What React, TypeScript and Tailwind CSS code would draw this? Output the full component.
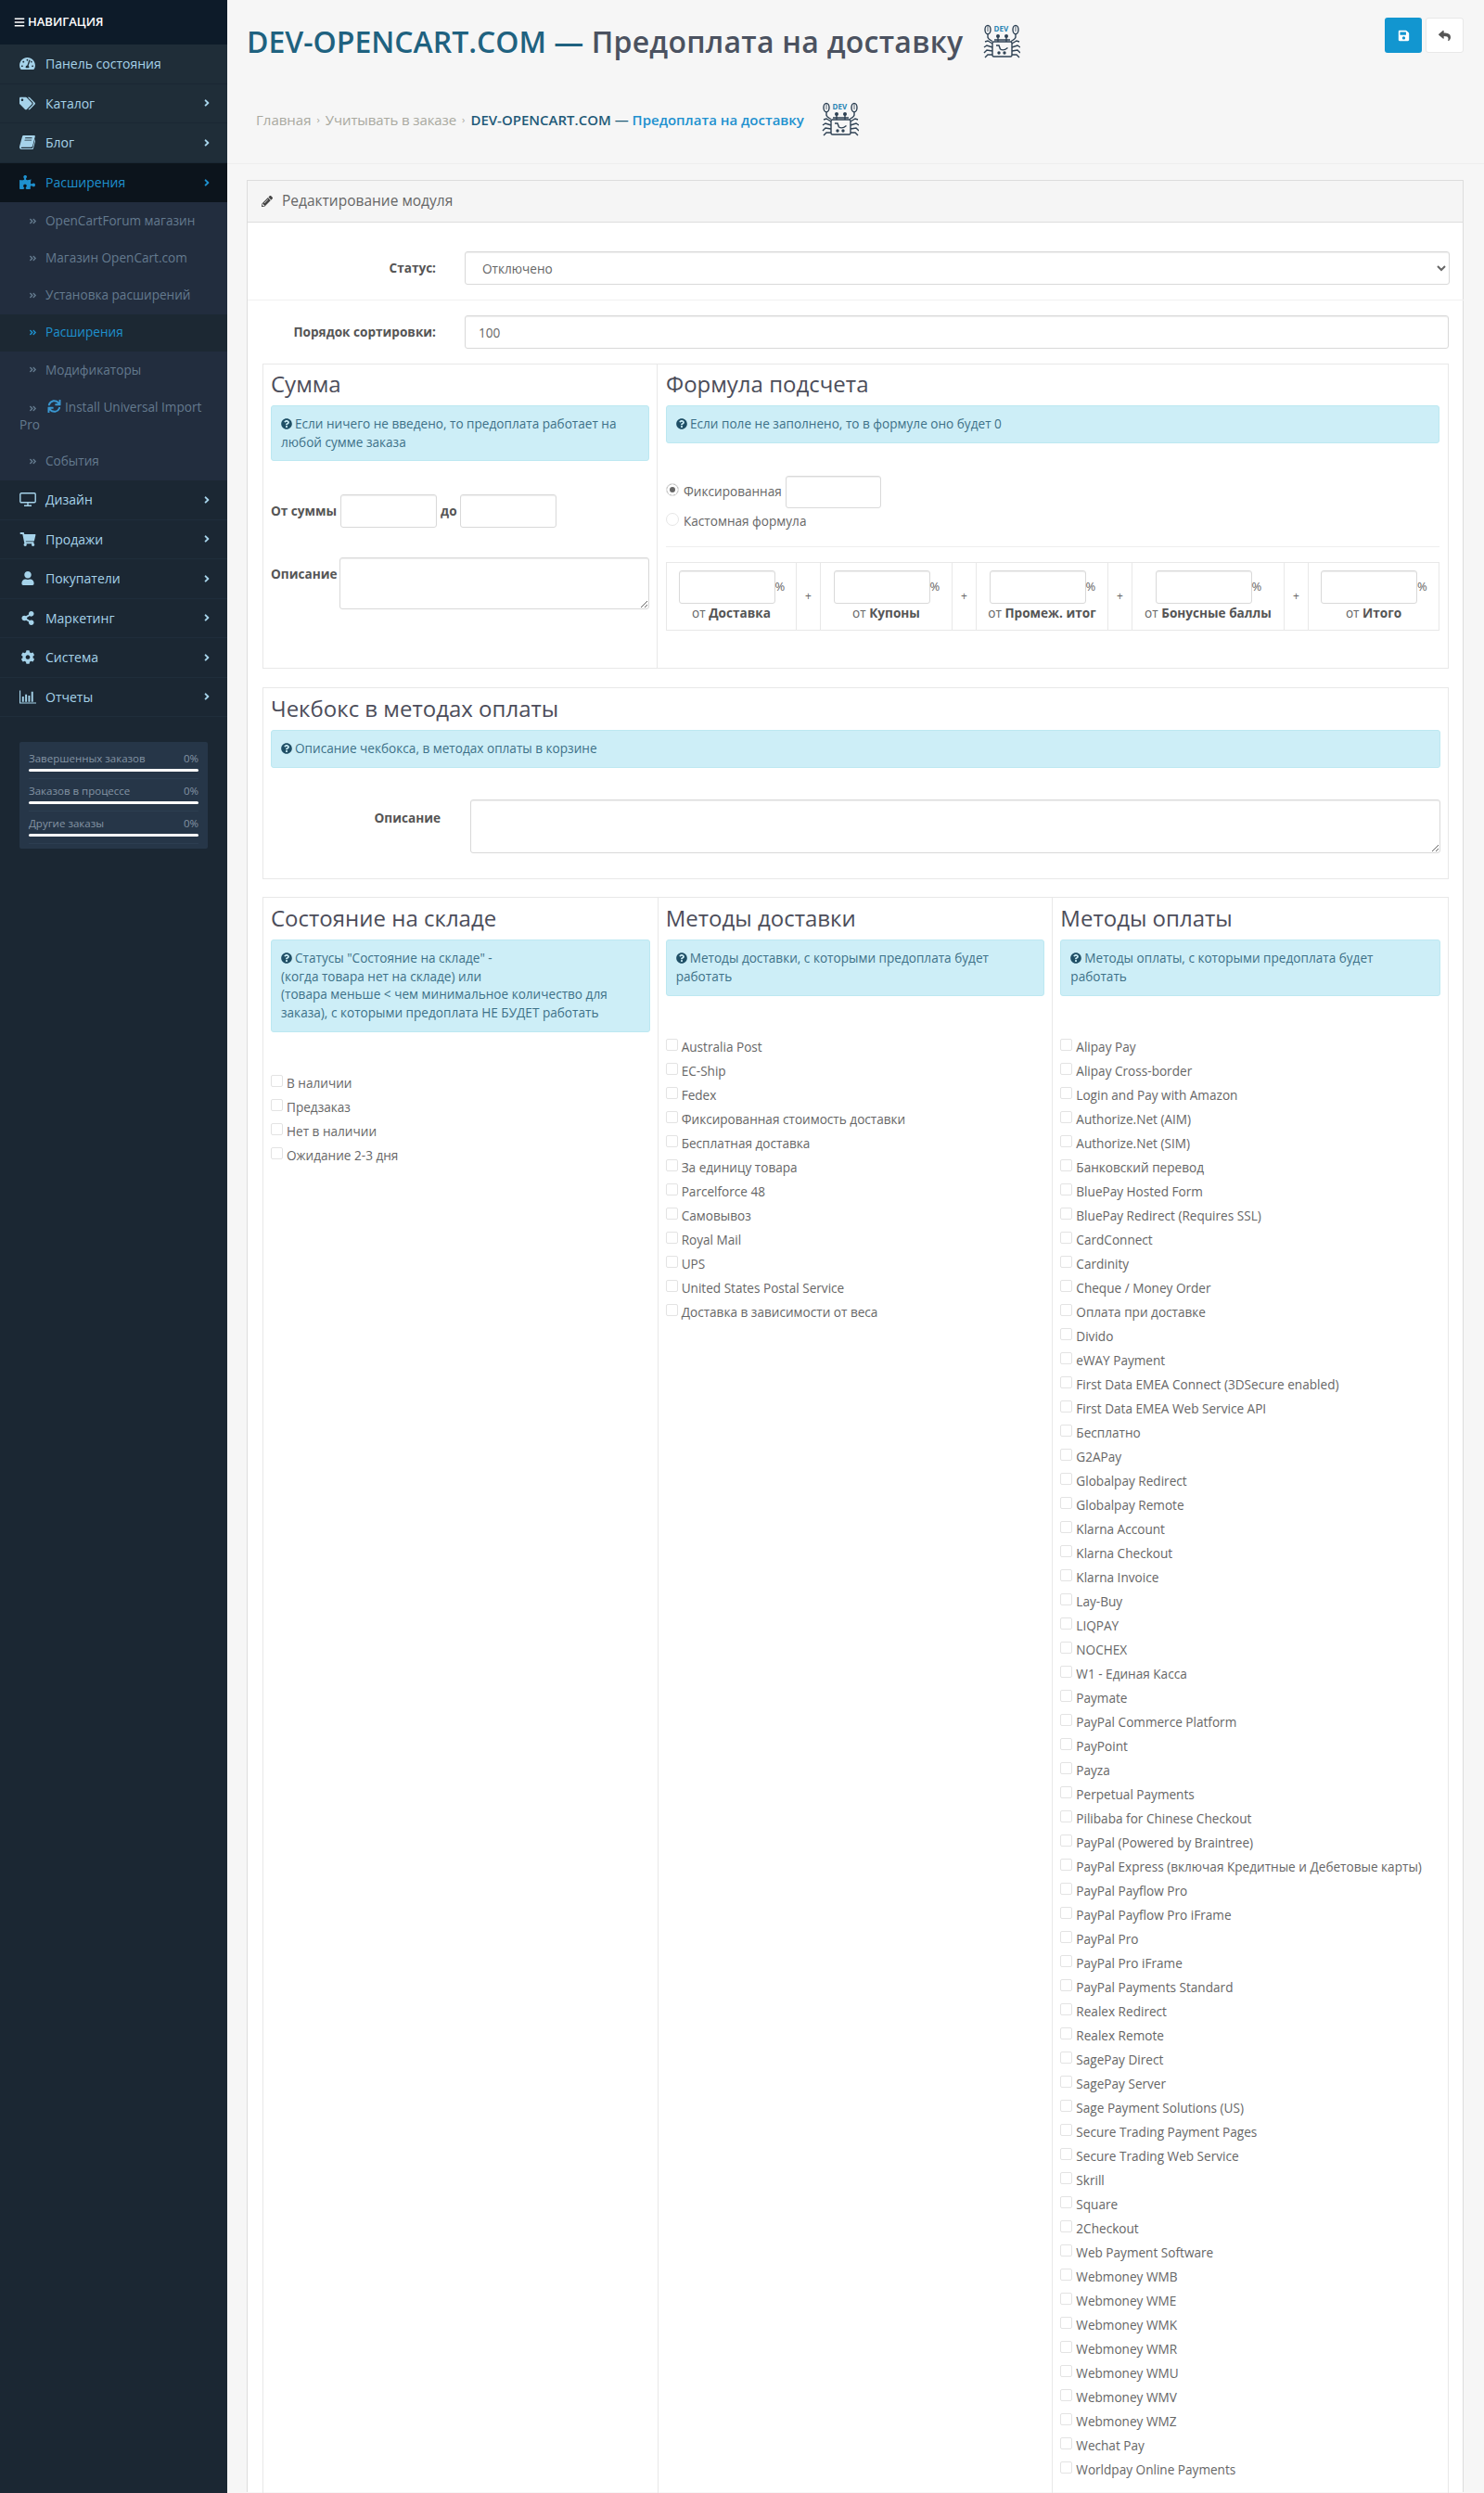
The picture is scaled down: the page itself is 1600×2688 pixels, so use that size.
import type { ReactNode } from "react"
import {
  FaTachometerAlt, FaTags, FaPuzzlePiece, FaShoppingCart, FaUser,
  FaShareAlt, FaCog, FaBars, FaAngleRight, FaAngleDoubleRight, FaPencilAlt,
  FaQuestionCircle, FaSave, FaReply, FaSync,
} from "react-icons/fa"

// fa4 book is slanted, the bundled fa5 one is not
function BookIcon({ className }: { className?: string }) {
  return (
    <svg viewBox="0 0 17 15" className={className} fill="currentColor">
      <path d="M4.500 0h11.500c.7 0 1 .5.8 1.200l-2.700 10.300c-.2.7-.8 1.200-1.500 1.200H2.600c-.6 0-.9.300-.9.700 0 .4.300.6.900.6h10.700c.5 0 .9-.3 1-.7l2.500-9.300.7.500-2.500 9.500c-.2.900-1 1.500-2 1.500H2.400C1 15 0 14 0 12.700c0-.3 0-.6.100-.9L3 1.300C3.200.5 3.800 0 4.500 0zM6 3.200h7.500v-.9H6.300zM5.400 5.600h7.500l.3-.9H5.700z" />
    </svg>
  )
}

// fa4 bar-chart: vertical bars on an L axis
function BarsIcon({ className }: { className?: string }) {
  return (
    <svg viewBox="0 0 19 15" className={className} fill="currentColor">
      <path d="M0 0h1.200v13.800H19V15H0zM3 7h2v6H3zM6.500 4.500h2V13h-2zM10 6h2v7h-2zM13.500 1.500h2V13h-2z" />
    </svg>
  )
}

function DesktopIcon({ className }: { className?: string }) {
  return (
    <svg viewBox="0 0 18 15" className={className} fill="none" stroke="currentColor" strokeWidth="1.400">
      <rect x="0.800" y="0.800" width="16.400" height="10" rx="1.200" />
      <path d="M9 11v3M5 14.200h8" />
    </svg>
  )
}

const topMenu = [
  { icon: FaTachometerAlt, label: "Панель состояния", arrow: false },
  { icon: FaTags, label: "Каталог", arrow: true },
  { icon: BookIcon, label: "Блог", arrow: true },
]
const bottomMenu = [
  { icon: DesktopIcon, label: "Дизайн" },
  { icon: FaShoppingCart, label: "Продажи" },
  { icon: FaUser, label: "Покупатели" },
  { icon: FaShareAlt, label: "Маркетинг" },
  { icon: FaCog, label: "Система" },
  { icon: BarsIcon, label: "Отчеты" },
]
const stats = ["Завершенных заказов", "Заказов в процессе", "Другие заказы"]

const stockStatuses = ["В наличии", "Предзаказ", "Нет в наличии", "Ожидание 2-3 дня"]
const shippingMethods = [
  "Australia Post", "EC-Ship", "Fedex", "Фиксированная стоимость доставки", "Бесплатная доставка",
  "За единицу товара", "Parcelforce 48", "Самовывоз", "Royal Mail", "UPS",
  "United States Postal Service", "Доставка в зависимости от веса",
]
const paymentMethods = [
  "Alipay Pay", "Alipay Cross-border", "Login and Pay with Amazon", "Authorize.Net (AIM)", "Authorize.Net (SIM)",
  "Банковский перевод", "BluePay Hosted Form", "BluePay Redirect (Requires SSL)", "CardConnect", "Cardinity",
  "Cheque / Money Order", "Оплата при доставке", "Divido", "eWAY Payment", "First Data EMEA Connect (3DSecure enabled)",
  "First Data EMEA Web Service API", "Бесплатно", "G2APay", "Globalpay Redirect", "Globalpay Remote",
  "Klarna Account", "Klarna Checkout", "Klarna Invoice", "Lay-Buy", "LIQPAY", "NOCHEX", "W1 - Единая Касса", "Paymate",
  "PayPal Commerce Platform", "PayPoint", "Payza", "Perpetual Payments", "Pilibaba for Chinese Checkout",
  "PayPal (Powered by Braintree)", "PayPal Express (включая Кредитные и Дебетовые карты)", "PayPal Payflow Pro",
  "PayPal Payflow Pro iFrame", "PayPal Pro", "PayPal Pro iFrame", "PayPal Payments Standard", "Realex Redirect",
  "Realex Remote", "SagePay Direct", "SagePay Server", "Sage Payment Solutions (US)", "Secure Trading Payment Pages",
  "Secure Trading Web Service", "Skrill", "Square", "2Checkout", "Web Payment Software", "Webmoney WMB", "Webmoney WME",
  "Webmoney WMK", "Webmoney WMR", "Webmoney WMU", "Webmoney WMV", "Webmoney WMZ", "Wechat Pay", "Worldpay Online Payments",
]
const formulaParts = ["Доставка", "Купоны", "Промеж. итог", "Бонусные баллы", "Итого"]

function DevLogo() {
  return (
    <svg viewBox="10 8 40 38" className="w-[40px] h-[38px] shrink-0" fill="none" stroke="#2f4254" strokeWidth="1.4">
      <ellipse cx="15" cy="14" rx="3" ry="4.6" />
      <ellipse cx="45" cy="14" rx="3" ry="4.6" />
      <path d="M15 10v6M45 10v6" strokeWidth="0.8" />
      <path d="M15 18.600v3.400c0 2 2.500 3 5 4.500M45 18.600v3.400c0 2-2.500 3-5 4.500" />
      <path d="M26 21v6M35 21v6M22 25h17" />
      <circle cx="26" cy="21" r="1.300" fill="#2f4254" />
      <circle cx="35" cy="21" r="1.300" fill="#2f4254" />
      <rect x="20" y="27" width="21" height="16" rx="1.500" />
      <path d="M24 31h3l1.500 4c2 1.400 5 1 8-1.500" />
      <circle cx="27" cy="39" r="1" fill="#2f4254" />
      <circle cx="33" cy="39" r="1" fill="#2f4254" />
      <path d="M20 29l-5-3-3 1M20 33l-6-2-3 2M20 37l-6-1-3 3M20 41l-5 0-3 3M41 29l5-3 3 1M41 33l6-2 3 2M41 37l6-1 3 3M41 41l5 0 3 3" />
      <text x="21.500" y="16" fontSize="8" fontWeight="700" fill="#2b86b5" stroke="none" fontFamily="Open Sans, sans-serif">DEV</text>
    </svg>
  )
}

function Sidebar() {
  return (
    <aside className="w-[245px] shrink-0 bg-[#1b2733] text-[14px]">
      <div className="h-[48px] bg-[#0d1b29] flex items-center pl-[15px] gap-[3px] text-white text-[13px] font-semibold">
        <FaBars className="w-[12px] h-[12px]" />
        НАВИГАЦИЯ
      </div>
      {topMenu.map((item) => (
        <div key={item.label} className="h-[42.5px] bg-[#1f2d38] border-b border-[#1a2733] flex items-center pl-[21px] pr-[18px] text-[#a6d3ea]">
          <item.icon className="w-[17px] h-[15px] mr-[11px]" />
          <span className="flex-1">{item.label}</span>
          {item.arrow && <FaAngleRight className="w-[8px] h-[12px]" />}
        </div>
      ))}
      <div className="h-[42.5px] bg-[#0c141c] flex items-center pl-[21px] pr-[18px] text-[#1e91cf]">
        <FaPuzzlePiece className="w-[17px] h-[15px] mr-[11px]" />
        <span className="flex-1">Расширения</span>
        <FaAngleRight className="w-[8px] h-[12px]" />
      </div>
      <div className="bg-[#222d3e] text-[13.6px] text-[#647a8e] pb-[1px]">
        <SubItem>OpenCartForum магазин</SubItem>
        <SubItem>Магазин OpenCart.com</SubItem>
        <SubItem>Установка расширений</SubItem>
        <SubItem active>Расширения</SubItem>
        <SubItem>Модификаторы</SubItem>
        <div className="pl-[21px] pr-[15px] py-[10px] leading-[19px]">
          <FaAngleDoubleRight className="inline w-[9px] h-[9px] ml-[10px] mr-[10px]" />
          <FaSync className="inline w-[17px] h-[14px] mr-[3px] text-[#3a97d0] align-[-1px]" />
          Install Universal Import Pro
        </div>
        <SubItem>События</SubItem>
      </div>
      {bottomMenu.map((item) => (
        <div key={item.label} className="h-[42.5px] border-b border-[#1f2d3b] flex items-center pl-[21px] pr-[18px] text-[#a6d3ea]">
          <item.icon className="w-[18px] h-[15px] mr-[10px]" />
          <span className="flex-1">{item.label}</span>
          <FaAngleRight className="w-[8px] h-[12px]" />
        </div>
      ))}
      <div className="mt-[27px] mx-[21px] h-[115px] rounded-[2px] bg-[#263648] px-[10px] pt-[5px] text-[11.500px] text-[#8494a4]">
        {stats.map((label) => (
          <div key={label} className="h-[35px] pt-[5px] border-b border-[#2c3e51]">
            <div className="flex justify-between leading-[16px]">
              <span>{label}</span>
              <span>0%</span>
            </div>
            <div className="mt-[3px] h-[3px] rounded-full bg-white" />
          </div>
        ))}
      </div>
    </aside>
  )
}

function SubItem({ children, active }: { children: ReactNode; active?: boolean }) {
  return (
    <div className={active ? "h-[40.2px] pl-[31px] flex items-center bg-[#1c2833] text-[#1e91cf]" : "h-[40.2px] pl-[31px] flex items-center"}>
      <FaAngleDoubleRight className="w-[9px] h-[9px] mr-[9px]" />
      {children}
    </div>
  )
}

function Alert({ children, className }: { children: ReactNode; className: string }) {
  return (
    <div className={"rounded-[3px] border border-[#bce8f1] bg-[#cdeef7] px-[10px] py-[9px] text-[#3d7188] leading-[19.500px] " + className}>
      <FaQuestionCircle className="inline w-[12px] h-[12px] mr-[3px] text-[#1f4f66] align-[-1px]" />
      {children}
    </div>
  )
}

function CheckList({ items, className }: { items: string[]; className: string }) {
  return (
    <div className={className}>
      {items.map((item) => (
        <label key={item} className="h-[26px] flex items-center">
          <input type="checkbox" readOnly className="appearance-none w-[13px] h-[13px] mr-[4px] -translate-y-[3px] border border-[#e3e3e3] rounded-[2px] bg-white" />
          {item}
        </label>
      ))}
    </div>
  )
}

const fieldClass = "block h-[36px] rounded-[3px] border border-[#d9d9d9] bg-white shadow-[inset_0_1px_1px_rgba(0,0,0,0.07)]"
const headingClass = "text-[24px] leading-[30px] text-[#4c4d5a]"

export default function App() {
  return (
    <div className="w-[1600px] h-[2688px] overflow-hidden flex bg-[#f6f6f6] font-['Open_Sans','Noto_Sans',sans-serif] text-[13.6px] text-[#666666]">
      <Sidebar />
      <main className="flex-1 min-w-0">
        <header className="h-[177px] border-b border-[#eeeeee]">
          <div className="pl-[21px] pr-[22px] pt-[19px] flex justify-between">
            <div className="flex items-center gap-[22px] h-[52px]">
              <h1 className="text-[32px] leading-[52px] font-semibold text-[#4b5260]">
                <span className="text-[#1f6280]">DEV-OPENCART.COM —</span> <span className="tracking-[0.25px]">Предоплата на доставку</span>
              </h1>
              <DevLogo />
            </div>
            <div className="flex gap-[4px]">
              <button className="w-[40px] h-[38px] rounded-[3px] bg-[#1296d0] text-white flex items-center justify-center">
                <FaSave className="w-[13px] h-[13px]" />
              </button>
              <button className="w-[41px] h-[38px] rounded-[3px] bg-white border border-[#e8e8e8] text-[#555555] flex items-center justify-center">
                <FaReply className="w-[13px] h-[13px]" />
              </button>
            </div>
          </div>
          <div className="mt-[39px] pl-[31px] flex items-center h-[38px] text-[15px] text-[#a9a99f]">
            <span>Главная</span>
            <span className="mx-[6px] text-[11px]">›</span>
            <span className="tracking-[-0.1px]">Учитывать в заказе</span>
            <span className="mx-[6px] text-[11px]">›</span>
            <span className="font-semibold text-[#1f5a78]">DEV-OPENCART.COM —&nbsp;</span>
            <span className="font-semibold text-[#1e91cf]">Предоплата на доставку</span>
            <span className="ml-[19px]"><DevLogo /></span>
          </div>
        </header>

        <section className="mt-[17px] ml-[21px] mr-[22px] border border-[#dddddd] border-b-0 bg-white h-[2493px]">
          <div className="h-[45px] bg-[#f5f5f5] border-b border-[#dddddd] flex items-center pl-[15px] text-[15.500px] text-[#666666]">
            <FaPencilAlt className="w-[12px] h-[12px] mr-[10px] text-[#444444]" />
            Редактирование модуля
          </div>
          <div className="pl-[16px] pr-[15px]">
            <div className="pt-[31px] pb-[16px] border-b border-[#f0f0f0] -mx-[16px] pl-[16px] pr-[15px] flex items-center">
              <label className="w-[187px] text-right font-bold text-[#555555]">Статус:</label>
              <select className={fieldClass + " ml-[31px] flex-1 px-[14px] text-[#666666]"} defaultValue="0">
                <option value="0">Отключено</option>
              </select>
            </div>
            <div className="pt-[16px] pb-[16px] flex items-center">
              <label className="w-[187px] text-right font-bold text-[#555555]">Порядок сортировки:</label>
              <input readOnly value="100" className={fieldClass + " ml-[31px] flex-1 px-[14px] text-[#666666]"} />
            </div>

            {/* Сумма / Формула */}
            <div className="h-[329px] border border-[#e8e8e8] flex">
              <div className="w-[425px] shrink-0 border-r border-[#e8e8e8] pl-[8px] pr-[8px] pt-[6px]">
                <h3 className={headingClass}>Сумма</h3>
                <Alert className="mt-[8px] h-[60px]">Если ничего не введено, то предоплата работает на любой сумме заказа</Alert>
                <div className="mt-[36px] flex items-center">
                  <b className="text-[#555555]">От суммы</b>
                  <input readOnly className={fieldClass + " ml-[4px] w-[104px]"} />
                  <b className="ml-[4px] text-[#555555]">до</b>
                  <input readOnly className={fieldClass + " ml-[3px] w-[104px]"} />
                </div>
                <div className="mt-[32px] flex items-start">
                  <b className="mt-[8px] text-[#555555]">Описание</b>
                  <textarea readOnly className={fieldClass + " ml-[2px] flex-1 !h-[56px]"} />
                </div>
              </div>
              <div className="flex-1 min-w-0 pl-[9px] pr-[9px] pt-[6px]">
                <h3 className={headingClass}>Формула подсчета</h3>
                <Alert className="mt-[8px] h-[41px]">Если поле не заполнено, то в формуле оно будет 0</Alert>
                <div className="mt-[35px] flex items-center h-[35px]">
                  <input type="radio" readOnly className="appearance-none w-[14px] h-[14px] -translate-y-[3px] rounded-full border border-[#e6e6e6] bg-white shadow-[inset_0_0_0_3px_#ffffff] checked:bg-[#666666]" defaultChecked />
                  <span className="ml-[5px]">Фиксированная</span>
                  <input readOnly className={fieldClass + " ml-[4px] w-[103px] !h-[35px]"} />
                </div>
                <div className="mt-[3px] flex items-center h-[22px]">
                  <input type="radio" readOnly className="appearance-none w-[14px] h-[14px] -translate-y-[2px] rounded-full border border-[#e6e6e6] bg-white" />
                  <span className="ml-[5px]">Кастомная формула</span>
                </div>
                <div className="mt-[16px] border-t border-[#eeeeee]" />
                <div className="mt-[16px] h-[74px] border border-[#e8e8e8] grid grid-cols-[139px_27px_141px_27px_141px_27px_163px_27px_1fr]">
                  {formulaParts.map((label, i) => (
                    <FormulaCell key={label} label={label} last={i === formulaParts.length - 1} />
                  ))}
                </div>
              </div>
            </div>

            {/* Чекбокс */}
            <div className="mt-[20px] h-[207px] border border-[#e8e8e8] px-[8px] pt-[7px]">
              <h3 className={headingClass}>Чекбокс в методах оплаты</h3>
              <Alert className="mt-[8px] h-[41px]">Описание чекбокса, в методах оплаты в корзине</Alert>
              <div className="mt-[34px] flex items-start">
                <b className="w-[183px] mt-[10px] text-right text-[#555555]">Описание</b>
                <textarea readOnly className={fieldClass + " ml-[32px] flex-1 !h-[58px]"} />
              </div>
            </div>

            {/* Склад / доставка / оплата */}
            <div className="mt-[19px] h-[1760px] border border-[#e8e8e8] grid grid-cols-3">
              <div className="border-r border-[#e8e8e8] pl-[8px] pr-[8px] pt-[7px]">
                <h3 className={headingClass}>Состояние на складе</h3>
                <Alert className="mt-[8px] h-[100px]">
                  Статусы "Состояние на складе" -<br />
                  (когда товара нет на складе) или<br />
                  (товара меньше &lt; чем минимальное количество для заказа), с которыми предоплата НЕ БУДЕТ работать
                </Alert>
                <CheckList items={stockStatuses} className="mt-[42px]" />
              </div>
              <div className="border-r border-[#e8e8e8] pl-[8px] pr-[8px] pt-[7px]">
                <h3 className={headingClass}>Методы доставки</h3>
                <Alert className="mt-[8px] h-[61px]">Методы доставки, с которыми предоплата будет работать</Alert>
                <CheckList items={shippingMethods} className="mt-[42px]" />
              </div>
              <div className="pl-[8px] pr-[8px] pt-[7px]">
                <h3 className={headingClass}>Методы оплаты</h3>
                <Alert className="mt-[8px] h-[61px]">Методы оплаты, с которыми предоплата будет работать</Alert>
                <CheckList items={paymentMethods} className="mt-[42px]" />
              </div>
            </div>
          </div>
        </section>
      </main>
    </div>
  )
}

function FormulaCell({ label, last }: { label: string; last: boolean }) {
  return (
    <>
      <div className="pt-[8px] flex flex-col items-center">
        <div className="flex items-center">
          <input readOnly className={fieldClass + " w-[104px]"} />
          <span className="w-[10px] text-[13px]">%</span>
        </div>
        <div className="mt-[1px] leading-[18px] text-center">
          от <b className="text-[#555555]">{label}</b>
        </div>
      </div>
      {!last && (
        <div className="border-x border-[#e8e8e8] flex items-center justify-center text-[12px]">+</div>
      )}
    </>
  )
}
